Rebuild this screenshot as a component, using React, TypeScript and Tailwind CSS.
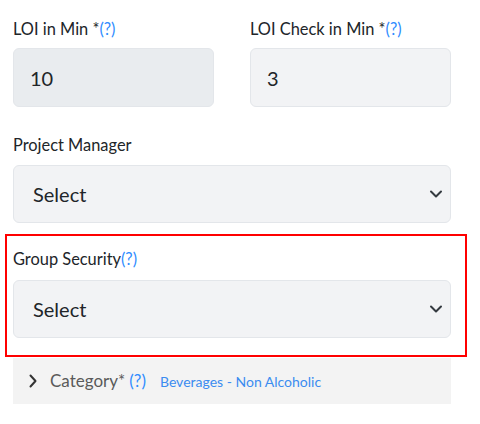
import React from "react";

const Help = () => <span className="text-[#2f8cff]">(?)</span>;

const Chevron = () => (
  <svg width="16" height="12" viewBox="0 0 16 12" className="shrink-0">
    <path d="M3 3.5l5 5 5-5" fill="none" stroke="#343a40" strokeWidth="2" strokeLinecap="round" strokeLinejoin="round" />
  </svg>
);

const SelectBox = () => (
  <div className="flex h-[58px] items-center justify-between rounded-[6px] border border-[#e3e6ea] bg-[#f2f3f5] pl-[19px] pr-[6px] text-[20px] text-[#212529]">
    <span>Select</span>
    <Chevron />
  </div>
);

export default function App() {
  return (
    <div className="w-[480px] h-[424px] bg-white font-['Lato',sans-serif] text-[#212529]">
      <div className="grid grid-cols-2 gap-x-[36px] pl-[13px] pr-[29px] pt-[18px]">
        <div>
          <div className="mb-[8px] text-[16.4px] leading-[22px]">
            LOI in Min *<Help />
          </div>
          <div className="flex h-[59px] items-center rounded-[6px] border border-[#e3e6ea] bg-[#e9ecef] pl-[16px] text-[20px] text-[#212529]">
            10
          </div>
        </div>
        <div>
          <div className="mb-[8px] text-[16.4px] leading-[22px]">
            LOI Check in Min *<Help />
          </div>
          <div className="flex h-[59px] items-center rounded-[6px] border border-[#e3e6ea] bg-[#f2f3f5] pl-[16px] text-[20px] text-[#212529]">
            3
          </div>
        </div>
      </div>

      <div className="pl-[13px] pr-[29px] pt-[27px]">
        <div className="mb-[9px] text-[16.4px] leading-[22px]">Project Manager</div>
        <SelectBox />
      </div>

      <div className="ml-[5px] mt-[11px] w-[462px] border-2 border-[#ff0000] pl-[6px] pr-[14px] pt-[12px] pb-[17px]">
        <div className="mb-[10px] text-[16.4px] leading-[22px]">
          Group Security<Help />
        </div>
        <SelectBox />
      </div>

      <div className="ml-[13px] mt-[1px] flex h-[46px] w-[438px] items-center bg-[#f3f3f3] pl-[15px]">
        <svg width="10" height="14" viewBox="0 0 10 14" className="shrink-0">
          <path d="M2.5 1.5l5 5.5-5 5.5" fill="none" stroke="#333" strokeWidth="2" strokeLinecap="round" strokeLinejoin="round" />
        </svg>
        <span className="ml-[12px] text-[17px] text-[#5a5a5a]">Category*</span>
        <span className="ml-[4px] text-[17px] text-[#2f8cff]">(?)</span>
        <span className="ml-[14px] text-[14px] text-[#3b8cf0]">Beverages - Non Alcoholic</span>
      </div>
    </div>
  );
}
